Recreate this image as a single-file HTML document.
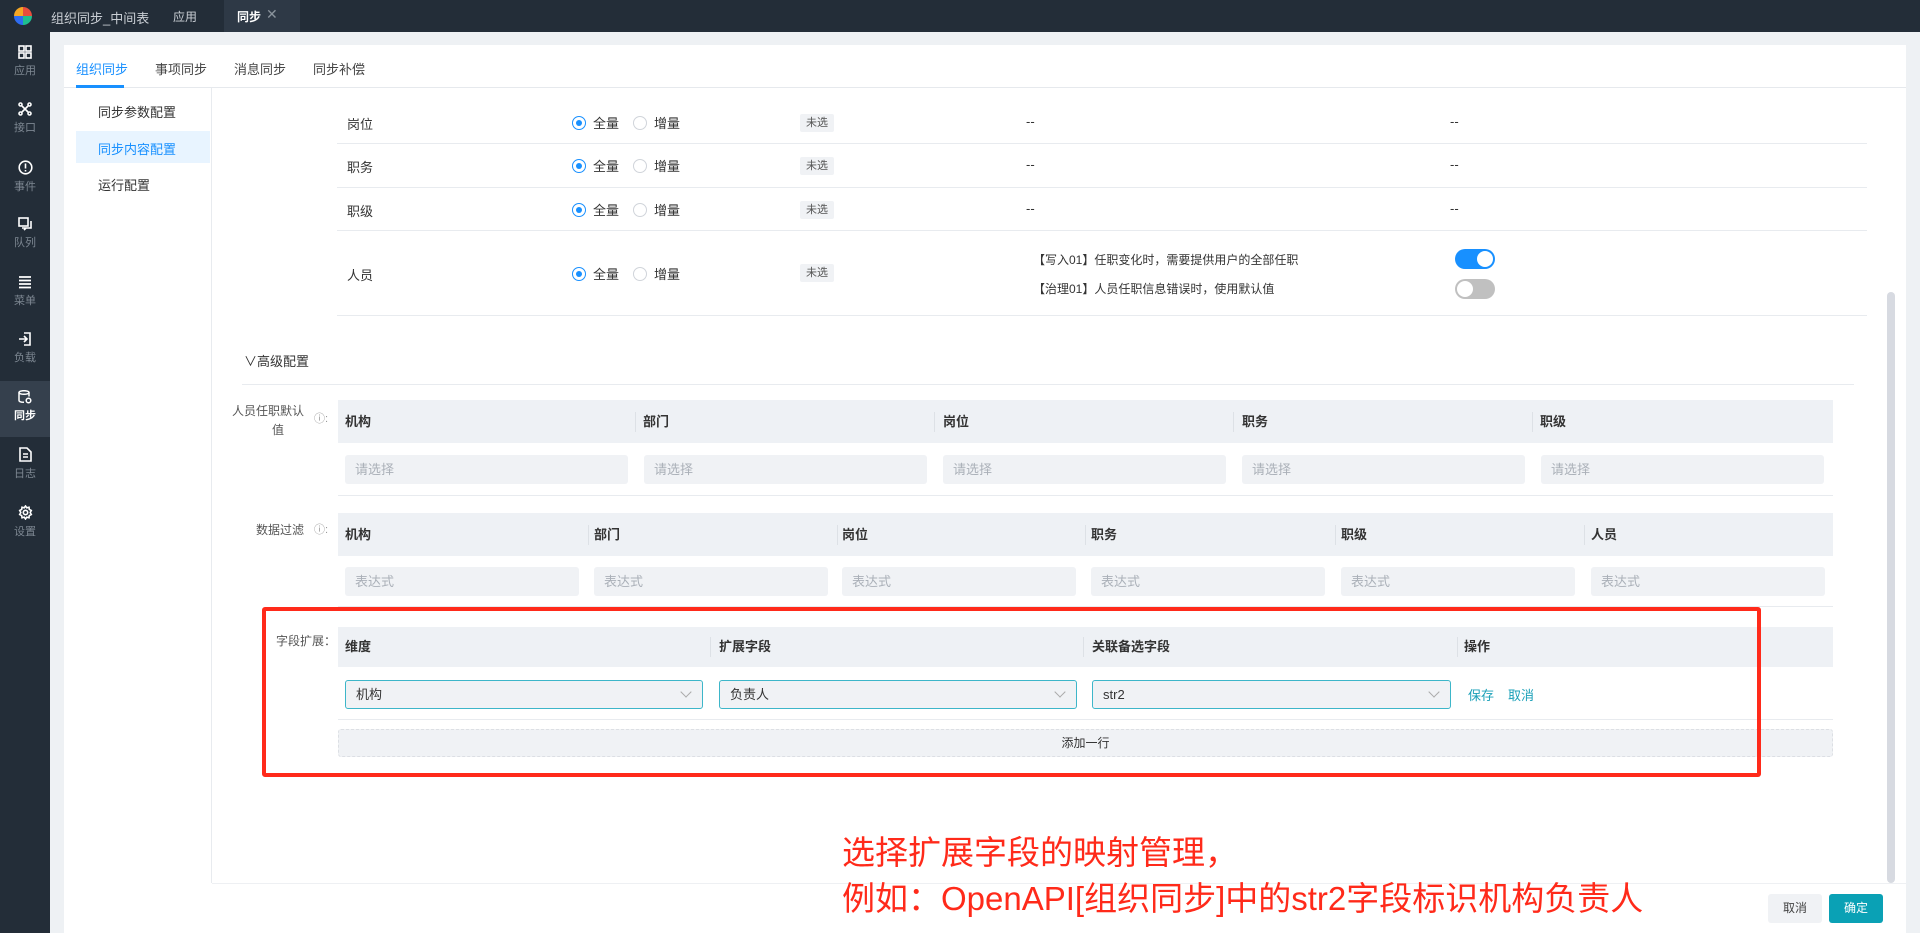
<!DOCTYPE html>
<html><head><meta charset="utf-8"><style>
*{box-sizing:border-box;margin:0;padding:0}
body{width:1920px;height:933px;overflow:hidden;background:#eef1f4;font-family:"Liberation Sans","Noto Sans CJK SC",sans-serif;font-size:13px;color:#333;position:relative}
.a{position:absolute}
.top{left:0;top:0;width:1920px;height:32px;background:#232d38}
.side{left:0;top:32px;width:50px;height:901px;background:#232d38}
.si{position:absolute;left:0;width:50px;text-align:center;color:#7d8792;font-size:11px}
.si svg{display:block;margin:0 auto 3px}
.card{left:64px;top:45px;width:1842px;height:888px;background:#fff}
.t{position:absolute;white-space:nowrap}
.hr{position:absolute;height:1px;background:#e8ebef}
.radio{position:absolute;width:14px;height:14px;border-radius:50%;border:1px solid #d0d4da;background:#fff}
.radio.on{border-color:#1890ff}
.radio.on:after{content:"";position:absolute;left:3px;top:3px;width:6px;height:6px;border-radius:50%;background:#1890ff}
.tag{position:absolute;width:34px;height:18px;background:#f0f2f5;border-radius:2px;font-size:11px;text-align:center;line-height:18px;color:#555}
.th{position:absolute;background:#eef1f5;font-weight:bold;color:#333}
.th span{position:absolute;top:0;line-height:inherit}
.sep{position:absolute;width:1px;background:#dde1e6}
.inp{position:absolute;background:#f0f2f5;border-radius:3px;color:#aab0b8;padding-left:10px}
.sel{position:absolute;border:1px solid #3db6c9;border-radius:3px;background:#f0f2f5;padding-left:10px;line-height:27px;color:#333}
.sel:after{content:"";position:absolute;right:12px;top:7px;width:7px;height:7px;border-right:1px solid #aaa;border-bottom:1px solid #aaa;transform:rotate(45deg)}
.tg{position:absolute;width:40px;height:20px;border-radius:10px}
</style></head><body>
<div class="a top"></div>
<div class="a" style="left:14px;top:7px;width:18px;height:18px;border-radius:50%;background:conic-gradient(#e94e3c 0 25%,#1fbf8f 25% 50%,#2f6cf0 50% 75%,#f5a623 75%)"></div>
<div class="t" style="left:51px;top:8px;color:#c9ced4;font-size:13px">组织同步_中间表</div>
<div class="t" style="left:173px;top:8px;color:#c9ced4;font-size:12px">应用</div>
<div class="a" style="left:224px;top:0;width:76px;height:32px;background:#2e3946"></div>
<div class="t" style="left:237px;top:8px;color:#fff;font-size:12px;font-weight:bold">同步</div>
<div class="t" style="left:266px;top:6px;color:#8a939c;font-size:14px">✕</div>
<div class="a side"></div>
<div class="a" style="left:0;top:381px;width:50px;height:56px;background:#35404d"></div>
<div class="si" style="top:45px"><svg width="14" height="14" viewBox="0 0 14 14" fill="none" stroke="#fff" stroke-width="1.6"><rect x="1" y="1" width="5" height="5"/><rect x="8" y="1" width="5" height="5"/><rect x="1" y="8" width="5" height="5"/><rect x="8" y="8" width="5" height="5"/></svg>应用</div>
<div class="si" style="top:102px"><svg width="14" height="14" viewBox="0 0 14 14" fill="none" stroke="#fff" stroke-width="1.6"><circle cx="2.5" cy="2.5" r="1.5"/><circle cx="11.5" cy="2.5" r="1.5"/><circle cx="2.5" cy="11.5" r="1.5"/><circle cx="11.5" cy="11.5" r="1.5"/><path d="M4 4l6 6M10 4l-6 6"/></svg>接口</div>
<div class="si" style="top:160px"><svg width="15" height="15" viewBox="0 0 15 15" fill="none" stroke="#fff" stroke-width="1.6"><circle cx="7.5" cy="7.5" r="6.3"/><path d="M7.5 3.5v5M7.5 10v1.5"/></svg>事件</div>
<div class="si" style="top:217px"><svg width="14" height="14" viewBox="0 0 14 14" fill="none" stroke="#fff" stroke-width="1.6"><rect x="1" y="1" width="9" height="8"/><path d="M4 11h9V4M6 13l2-2"/></svg>队列</div>
<div class="si" style="top:275px"><svg width="14" height="14" viewBox="0 0 14 14" fill="none" stroke="#fff" stroke-width="1.8"><path d="M1 2h12M1 5.5h12M1 9h12M1 12.5h12"/></svg>菜单</div>
<div class="si" style="top:332px"><svg width="14" height="14" viewBox="0 0 14 14" fill="none" stroke="#fff" stroke-width="1.6"><path d="M6 1h6v12H6M1 7h8M6 4l3 3-3 3"/></svg>负载</div>
<div class="si" style="top:390px;color:#fff;font-weight:bold"><svg width="14" height="14" viewBox="0 0 14 14" fill="none" stroke="#fff" stroke-width="1.5"><ellipse cx="6" cy="2.5" rx="5" ry="1.8"/><path d="M1 2.5v8c0 1 2 1.8 5 1.8M11 2.5v4"/><circle cx="10.5" cy="10.5" r="2.3"/></svg>同步</div>
<div class="si" style="top:447px"><svg width="13" height="15" viewBox="0 0 13 15" fill="none" stroke="#fff" stroke-width="1.6"><path d="M1 1h7l4 4v9H1z M4 7h5M4 10h5"/></svg>日志</div>
<div class="si" style="top:505px"><svg width="15" height="15" viewBox="0 0 15 15" fill="none" stroke="#fff" stroke-width="1.6"><circle cx="7.5" cy="7.5" r="2.2"/><path d="M7.5 1l1.3 1.8 2.2-.6.3 2.2 2 1.1-1.1 2 1.1 2-2 1.1-.3 2.2-2.2-.6L7.5 14l-1.3-1.8-2.2.6-.3-2.2-2-1.1 1.1-2-1.1-2 2-1.1.3-2.2 2.2.6z"/></svg>设置</div>

<div class="a card"></div>
<div class="t" style="left:76px;top:59px;color:#1890ff;font-size:13px">组织同步</div>
<div class="t" style="left:155px;top:59px;font-size:13px;color:#444">事项同步</div>
<div class="t" style="left:234px;top:59px;font-size:13px;color:#444">消息同步</div>
<div class="t" style="left:313px;top:59px;font-size:13px;color:#444">同步补偿</div>
<div class="hr" style="left:64px;top:87px;width:1842px;background:#e6e9ed"></div>
<div class="a" style="left:76px;top:85px;width:48px;height:3px;background:#1890ff"></div>
<div class="a" style="left:211px;top:88px;width:1px;height:795px;background:#e8ebef"></div>
<div class="t" style="left:98px;top:102px;font-size:13px">同步参数配置</div>
<div class="a" style="left:76px;top:131px;width:134px;height:32px;background:#e8f4ff"></div>
<div class="t" style="left:98px;top:139px;font-size:13px;color:#1890ff">同步内容配置</div>
<div class="t" style="left:98px;top:175px;font-size:13px">运行配置</div>
<div class="a" style="left:1887px;top:292px;width:8px;height:591px;background:#d7dae1;border-radius:4px"></div>
<div class="hr" style="left:212px;top:883px;width:1694px;background:#eef0f3"></div>

<div class="t" style="left:347px;top:114px">岗位</div>
<div class="t" style="left:347px;top:157px">职务</div>
<div class="t" style="left:347px;top:201px">职级</div>
<div class="t" style="left:347px;top:265px">人员</div>
<div class="hr" style="left:337px;top:143px;width:1530px"></div>
<div class="hr" style="left:337px;top:187px;width:1530px"></div>
<div class="hr" style="left:337px;top:230px;width:1530px"></div>
<div class="hr" style="left:337px;top:315px;width:1530px"></div>

<div class="radio on" style="left:572px;top:116px"></div><div class="t" style="left:593px;top:113px">全量</div>
<div class="radio" style="left:633px;top:116px"></div><div class="t" style="left:654px;top:113px">增量</div>
<div class="radio on" style="left:572px;top:159px"></div><div class="t" style="left:593px;top:156px">全量</div>
<div class="radio" style="left:633px;top:159px"></div><div class="t" style="left:654px;top:156px">增量</div>
<div class="radio on" style="left:572px;top:203px"></div><div class="t" style="left:593px;top:200px">全量</div>
<div class="radio" style="left:633px;top:203px"></div><div class="t" style="left:654px;top:200px">增量</div>
<div class="radio on" style="left:572px;top:267px"></div><div class="t" style="left:593px;top:264px">全量</div>
<div class="radio" style="left:633px;top:267px"></div><div class="t" style="left:654px;top:264px">增量</div>
<div class="tag" style="left:800px;top:114px">未选</div>
<div class="tag" style="left:800px;top:157px">未选</div>
<div class="tag" style="left:800px;top:201px">未选</div>
<div class="tag" style="left:800px;top:264px">未选</div>
<div class="t" style="left:1026px;top:114px">--</div><div class="t" style="left:1450px;top:114px">--</div>
<div class="t" style="left:1026px;top:157px">--</div><div class="t" style="left:1450px;top:157px">--</div>
<div class="t" style="left:1026px;top:201px">--</div><div class="t" style="left:1450px;top:201px">--</div>
<div class="t" style="left:1033px;top:251px;font-size:12px">【写入01】任职变化时，需要提供用户的全部任职</div>
<div class="t" style="left:1033px;top:280px;font-size:12px">【治理01】人员任职信息错误时，使用默认值</div>
<div class="tg" style="left:1455px;top:249px;background:#1890ff"></div><div class="a" style="left:1477px;top:251px;width:16px;height:16px;border-radius:50%;background:#fff"></div>
<div class="tg" style="left:1455px;top:279px;background:#c0c0c0"></div><div class="a" style="left:1457px;top:281px;width:16px;height:16px;border-radius:50%;background:#fff"></div>

<div class="t" style="left:244px;top:351px;font-size:13px">∨高级配置</div>
<div class="hr" style="left:242px;top:384px;width:1612px"></div>

<div class="t" style="left:232px;top:402px;font-size:12px;color:#555">人员任职默认</div>
<div class="t" style="left:272px;top:421px;font-size:12px;color:#555">值</div>
<div class="t" style="left:314px;top:410px;font-size:11px;color:#999">ⓘ:</div>
<div class="th" style="left:338px;top:400px;width:1495px;height:43px;line-height:43px">
<span style="left:7px">机构</span><span style="left:305px">部门</span><span style="left:605px">岗位</span><span style="left:904px">职务</span><span style="left:1202px">职级</span></div>
<div class="sep" style="left:635px;top:412px;height:20px"></div><div class="sep" style="left:934px;top:412px;height:20px"></div><div class="sep" style="left:1233px;top:412px;height:20px"></div><div class="sep" style="left:1532px;top:412px;height:20px"></div>
<div class="inp" style="left:345px;top:455px;width:283px;height:29px;line-height:29px">请选择</div>
<div class="inp" style="left:644px;top:455px;width:283px;height:29px;line-height:29px">请选择</div>
<div class="inp" style="left:943px;top:455px;width:283px;height:29px;line-height:29px">请选择</div>
<div class="inp" style="left:1242px;top:455px;width:283px;height:29px;line-height:29px">请选择</div>
<div class="inp" style="left:1541px;top:455px;width:283px;height:29px;line-height:29px">请选择</div>
<div class="hr" style="left:338px;top:495px;width:1495px"></div>

<div class="t" style="left:256px;top:521px;font-size:12px;color:#555">数据过滤</div>
<div class="t" style="left:314px;top:521px;font-size:11px;color:#999">ⓘ:</div>
<div class="th" style="left:338px;top:513px;width:1495px;height:43px;line-height:43px">
<span style="left:7px">机构</span><span style="left:256px">部门</span><span style="left:504px">岗位</span><span style="left:753px">职务</span><span style="left:1003px">职级</span><span style="left:1253px">人员</span></div>
<div class="sep" style="left:588px;top:525px;height:20px"></div><div class="sep" style="left:837px;top:525px;height:20px"></div><div class="sep" style="left:1085px;top:525px;height:20px"></div><div class="sep" style="left:1335px;top:525px;height:20px"></div><div class="sep" style="left:1584px;top:525px;height:20px"></div>
<div class="inp" style="left:345px;top:567px;width:234px;height:29px;line-height:29px">表达式</div>
<div class="inp" style="left:594px;top:567px;width:234px;height:29px;line-height:29px">表达式</div>
<div class="inp" style="left:842px;top:567px;width:234px;height:29px;line-height:29px">表达式</div>
<div class="inp" style="left:1091px;top:567px;width:234px;height:29px;line-height:29px">表达式</div>
<div class="inp" style="left:1341px;top:567px;width:234px;height:29px;line-height:29px">表达式</div>
<div class="inp" style="left:1591px;top:567px;width:234px;height:29px;line-height:29px">表达式</div>
<div class="hr" style="left:338px;top:606px;width:1495px"></div>

<div class="t" style="left:276px;top:632px;font-size:12px;color:#555">字段扩展：</div>
<div class="th" style="left:338px;top:627px;width:1495px;height:40px;line-height:40px">
<span style="left:7px">维度</span><span style="left:381px">扩展字段</span><span style="left:754px">关联备选字段</span><span style="left:1126px">操作</span></div>
<div class="sep" style="left:710px;top:637px;height:20px"></div><div class="sep" style="left:1083px;top:637px;height:20px"></div><div class="sep" style="left:1457px;top:637px;height:20px"></div>
<div class="sel" style="left:345px;top:680px;width:358px;height:29px">机构</div>
<div class="sel" style="left:719px;top:680px;width:358px;height:29px">负责人</div>
<div class="sel" style="left:1092px;top:680px;width:359px;height:29px">str2</div>
<div class="t" style="left:1468px;top:685px;color:#1aa0b8">保存</div>
<div class="t" style="left:1508px;top:685px;color:#1aa0b8">取消</div>
<div class="hr" style="left:338px;top:719px;width:1495px"></div>
<div class="a" style="left:338px;top:729px;width:1495px;height:28px;background:#f0f2f5;border:1px dashed #dcdfe4;border-radius:3px;text-align:center;line-height:26px;font-size:12px">添加一行</div>

<div class="a" style="left:262px;top:607px;width:1499px;height:170px;border:4px solid #ff2a1a;border-radius:3px"></div>
<div class="t" style="left:842px;top:826px;color:#ff2a1a;font-size:33px">选择扩展字段的映射管理，</div>
<div class="t" style="left:842px;top:872px;color:#ff2a1a;font-size:33px">例如：OpenAPI[组织同步]中的str2字段标识机构负责人</div>

<div class="a" style="left:1768px;top:894px;width:54px;height:29px;background:#f0f2f5;border-radius:3px;text-align:center;line-height:29px;font-size:12px;color:#444">取消</div>
<div class="a" style="left:1829px;top:894px;width:54px;height:29px;background:#0aa1b5;border-radius:3px;text-align:center;line-height:29px;font-size:12px;color:#fff">确定</div>
</body></html>
